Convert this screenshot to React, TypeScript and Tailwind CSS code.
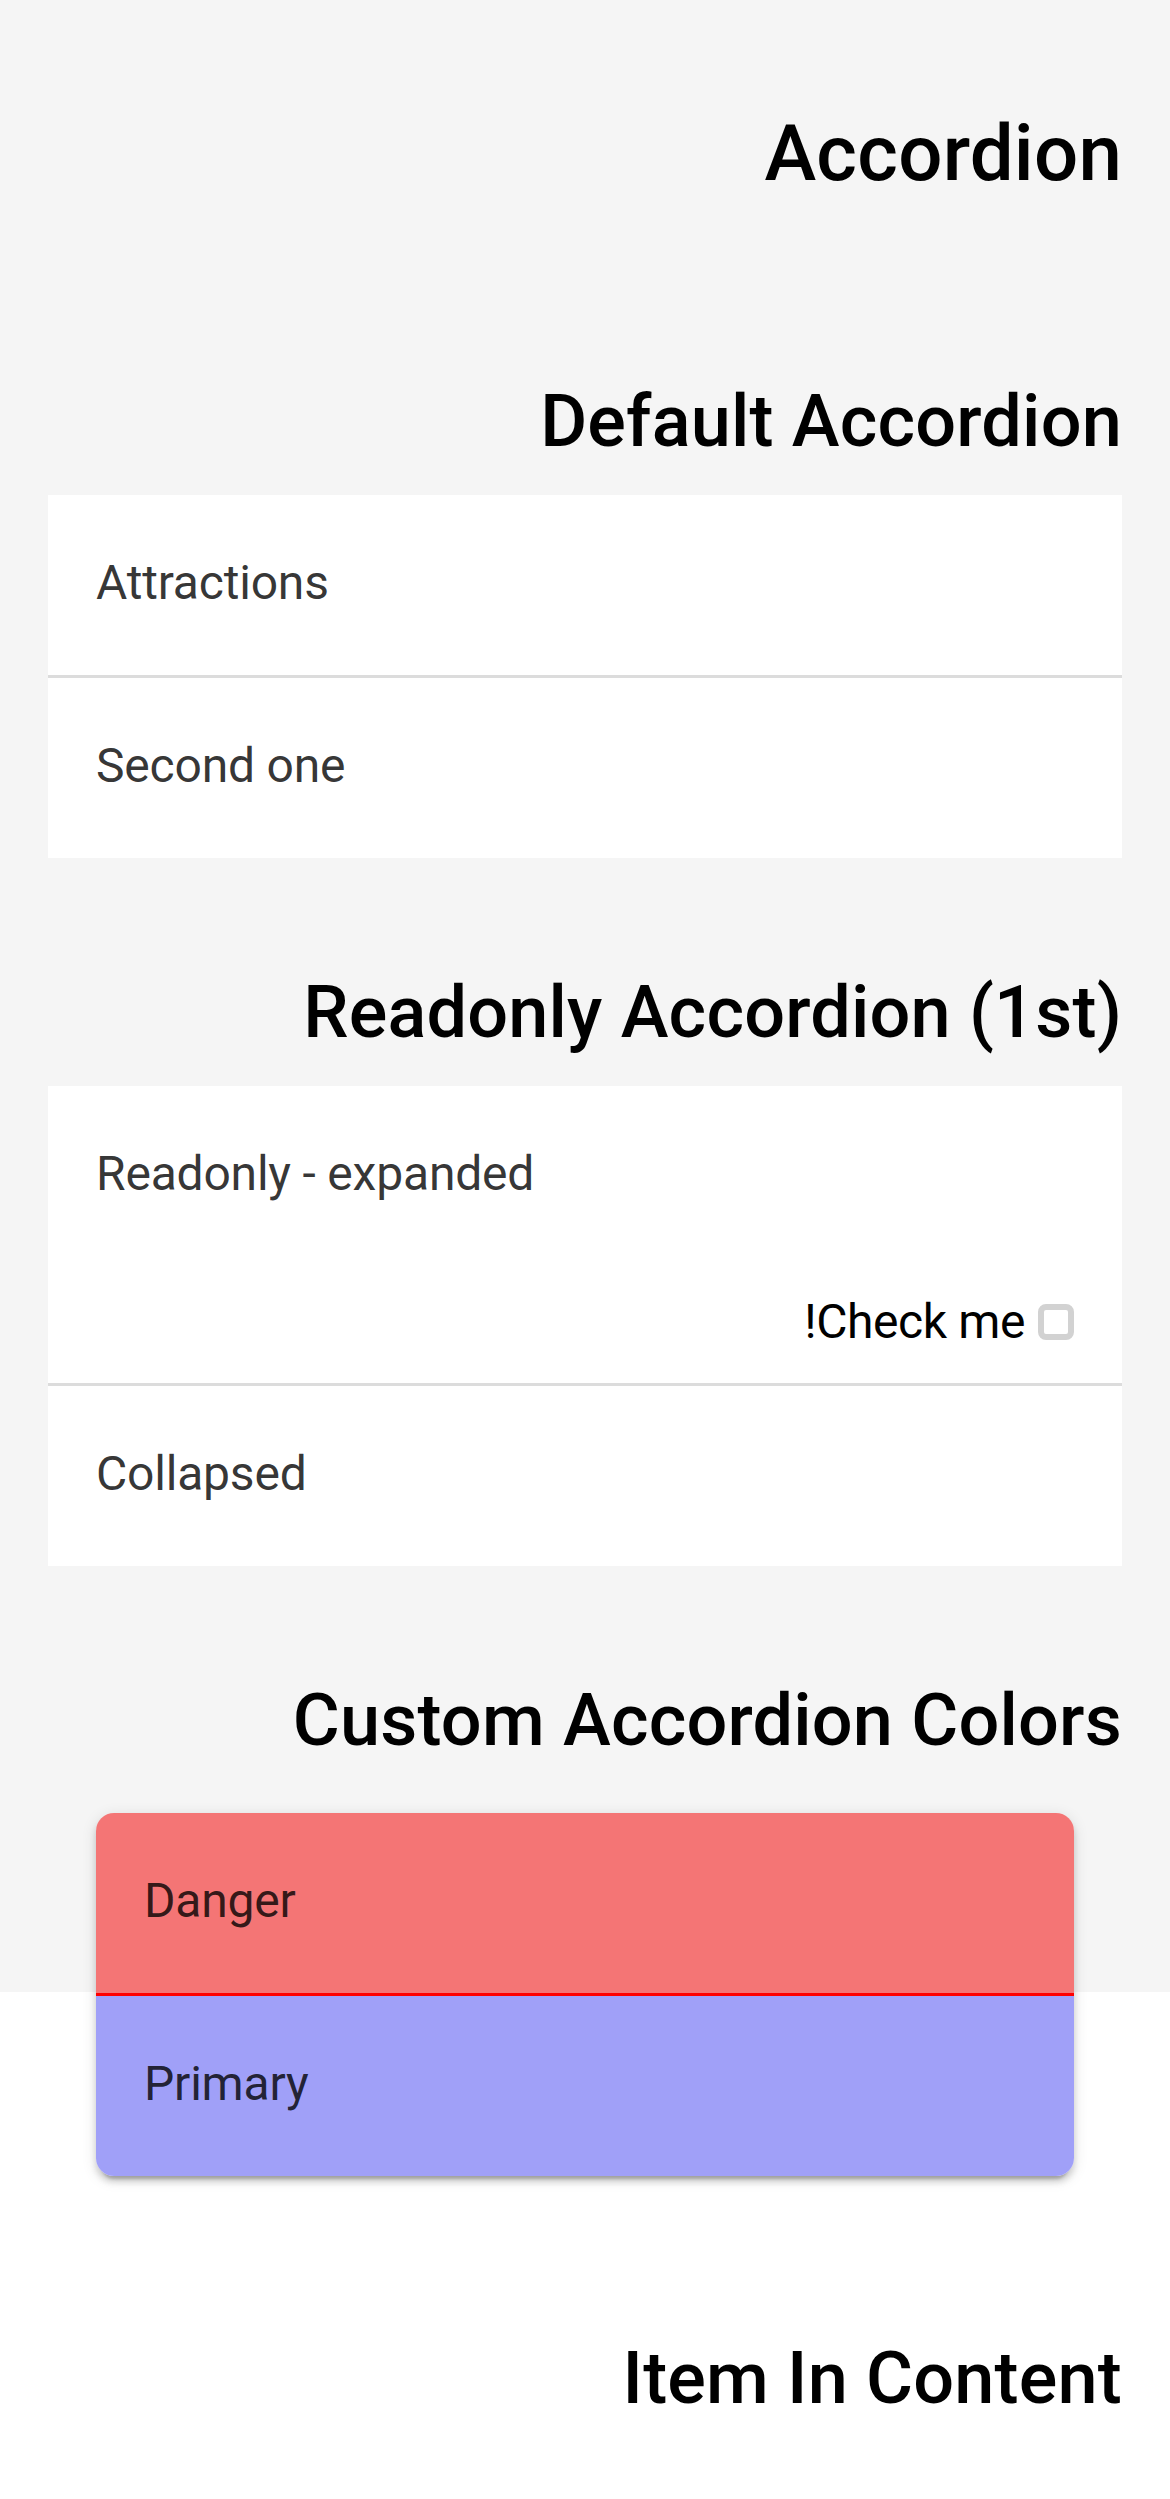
import type { ReactNode } from 'react';

function Heading({ children, className }: { children: ReactNode; className: string }) {
    return (
        <h2 className={`text-right text-[72px] font-medium leading-[1.2] tracking-[0.2px] text-black ${className}`}>
            {children}
        </h2>
    );
}

function ItemHeader({ label }: { label: string }) {
    return (
        <div className="flex h-[180px] items-center px-[48px] pb-[4px] text-[48px] tracking-[-0.2px] text-black/80">
            <span>{label}</span>
        </div>
    );
}

export default function App() {
    return (
        <div className="min-h-[2499px] bg-[linear-gradient(to_bottom,#f5f5f5_1992px,#ffffff_1992px)] px-[48px] pt-[107px] font-['Roboto',sans-serif]">
            <h1 className="text-right text-[78px] font-medium leading-[1.2] tracking-[0.2px] text-black">Accordion</h1>

            <Heading className="mt-[178px] mb-[30px]">Default Accordion</Heading>
            <div className="bg-white">
                <div className="border-b-[3px] border-[#dcdcdc]">
                    <ItemHeader label="Attractions" />
                </div>
                <ItemHeader label="Second one" />
            </div>

            <Heading className="mt-[112px] mb-[30px]">Readonly Accordion (1st)</Heading>
            <div className="bg-white">
                <div className="border-b-[3px] border-[#dcdcdc]">
                    <ItemHeader label="Readonly - expanded" />
                    <div className="flex h-[117px] items-start justify-end px-[48px] pt-[28px]">
                        <label className="flex h-[56px] items-center gap-[13px] text-[48px] tracking-[-0.4px] text-black">
                            <span>!Check me</span>
                            <span className="h-[36px] w-[36px] rounded-[8px] border-[6px] border-[#d2d2d2] bg-white" />
                        </label>
                    </div>
                </div>
                <ItemHeader label="Collapsed" />
            </div>

            <Heading className="mt-[112px] mb-[48px]">Custom Accordion Colors</Heading>
            <div className="mx-[48px] overflow-hidden rounded-[18px] shadow-[0_9px_3px_-6px_rgba(0,0,0,0.2),0_6px_6px_0_rgba(0,0,0,0.14),0_3px_15px_0_rgba(0,0,0,0.12)]">
                <div className="border-b-[3px] border-[#ff0000] bg-[#f47575]">
                    <ItemHeader label="Danger" />
                </div>
                <div className="bg-[#a0a0f8]">
                    <ItemHeader label="Primary" />
                </div>
            </div>

            <Heading className="mt-[160px]">Item In Content</Heading>
        </div>
    );
}
